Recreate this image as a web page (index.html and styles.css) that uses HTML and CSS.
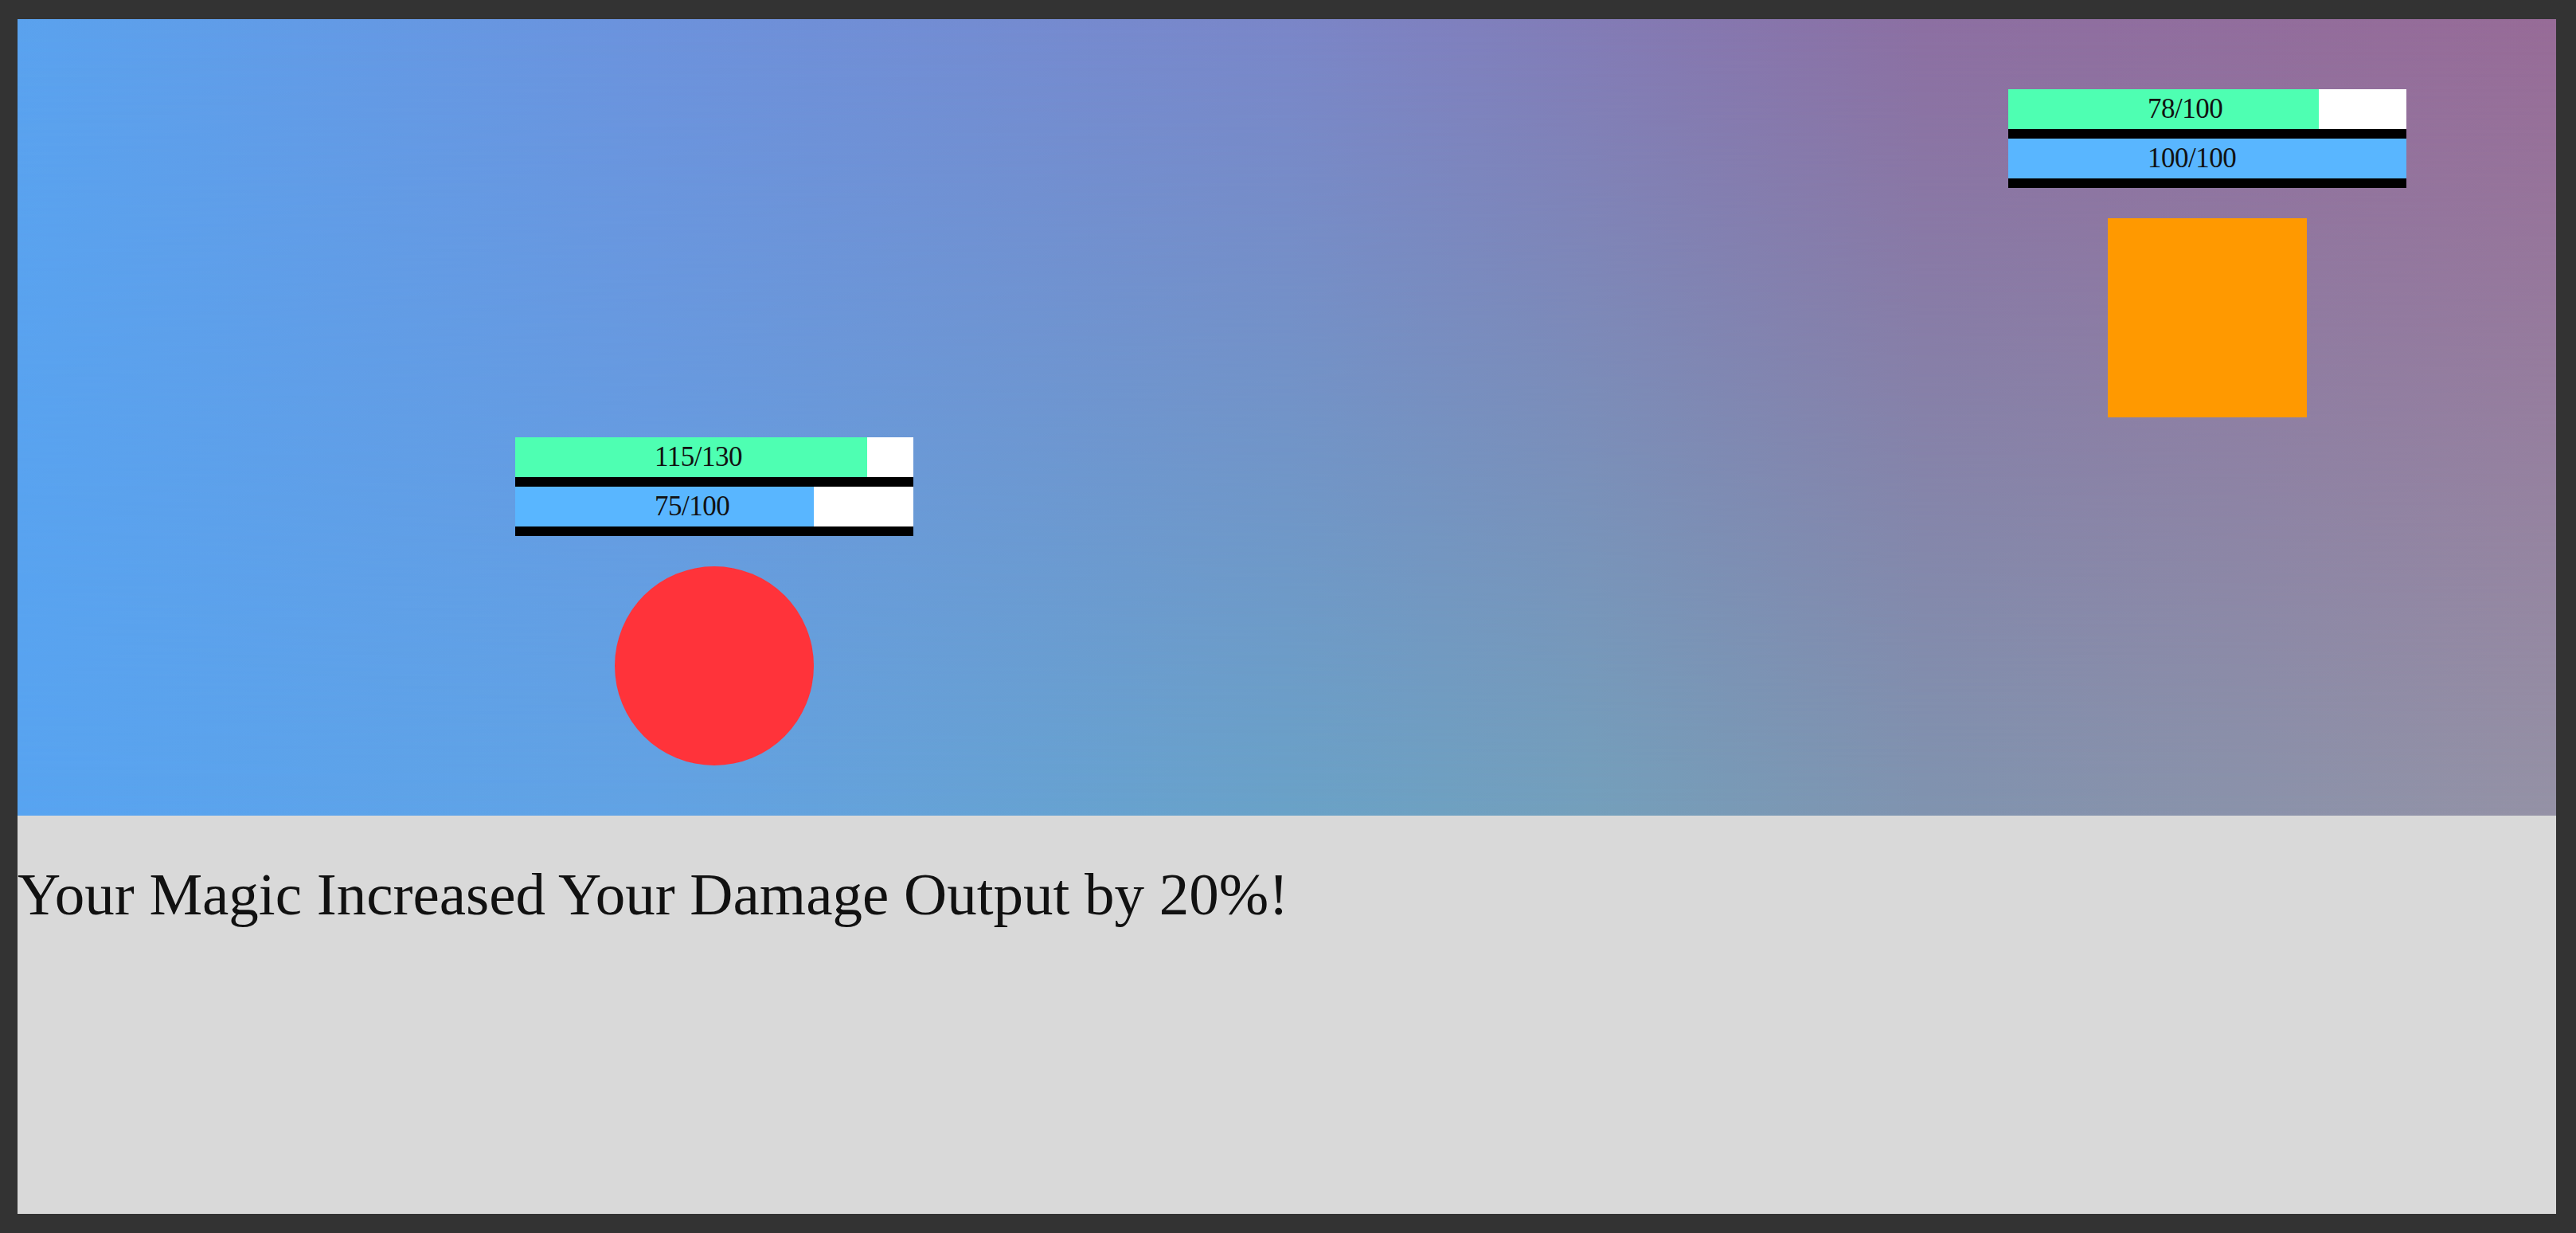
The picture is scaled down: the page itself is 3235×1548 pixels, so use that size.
FILE: index.html
```html
<!DOCTYPE html>
<html lang="en">
<head>
<meta charset="utf-8">
<title>Battle</title>
<link rel="stylesheet" href="styles.css">
</head>
<body>
<main class="game">
  <section class="battlefield">
    <div class="unit unit-player">
      <div class="bars">
        <div class="bar">
          <div class="fill fill-hp" style="width:88.4615%"></div>
          <span class="label">115/130</span>
        </div>
        <div class="bar">
          <div class="fill fill-mp" style="width:75%"></div>
          <span class="label">75/100</span>
        </div>
      </div>
      <div class="sprite sprite-circle"></div>
    </div>
    <div class="unit unit-enemy">
      <div class="bars">
        <div class="bar">
          <div class="fill fill-hp" style="width:78%"></div>
          <span class="label">78/100</span>
        </div>
        <div class="bar">
          <div class="fill fill-mp" style="width:100%"></div>
          <span class="label">100/100</span>
        </div>
      </div>
      <div class="sprite sprite-square"></div>
    </div>
  </section>
  <section class="log">
    <p class="log-text">Your Magic Increased Your Damage Output by 20%!</p>
  </section>
</main>
</body>
</html>
```
FILE: styles.css
```css
html, body {
  margin: 0;
  padding: 0;
}
body {
  background: #333333;
  padding: 24px 25px 24px 22px;
  font-family: "Liberation Serif", "Times New Roman", serif;
  color: #000;
}
.game {
  width: 3188px;
  height: 1500px;
  display: flex;
  flex-direction: column;
}
.battlefield {
  position: relative;
  height: 1000px;
  flex: none;
  background: linear-gradient(to right, #58a4f1 0%, #62a3e4 25%, #6aa2c8 50%, #74a0bc 62%, #8094b0 75%, #9592a6 100%);
  overflow: hidden;
}
.battlefield::before {
  content: "";
  position: absolute;
  inset: 0;
  background: linear-gradient(to right, #5aa2ee 0%, #6c92dc 25%, #7a86c8 50%, #8c6fa2 75%, #976b97 100%);
  -webkit-mask-image: linear-gradient(to bottom, #000 0%, rgba(0,0,0,0) 100%);
  mask-image: linear-gradient(to bottom, #000 0%, rgba(0,0,0,0) 100%);
}
.unit {
  position: absolute;
  width: 500px;
  display: flex;
  flex-direction: column;
  align-items: center;
  gap: 38px;
}
.unit-player {
  left: 625px;
  top: 525px;
}
.unit-enemy {
  left: 2500px;
  top: 88px;
}
.bars {
  width: 500px;
  display: flex;
  flex-direction: column;
}
.bar {
  position: relative;
  height: 50px;
  background: #ffffff;
  border-bottom: 12px solid #000000;
}
.fill {
  position: absolute;
  left: 0;
  top: 0;
  bottom: 0;
}
.fill-hp {
  background: #4effb2;
}
.fill-mp {
  background: #59b6ff;
}
.label {
  position: relative;
  display: block;
  padding-left: 175px;
  font-size: 35px;
  letter-spacing: -0.5px;
  line-height: 50px;
  color: #111;
}
.sprite {
  width: 250px;
  height: 250px;
  flex: none;
}
.sprite-circle {
  background: #ff333a;
  border-radius: 50%;
}
.sprite-square {
  background: #ff9900;
}
.log {
  flex: 1;
  background: #d9d9d9;
}
.log-text {
  margin: 56px 0 0 0;
  font-size: 75px;
  color: #111;
}
```
